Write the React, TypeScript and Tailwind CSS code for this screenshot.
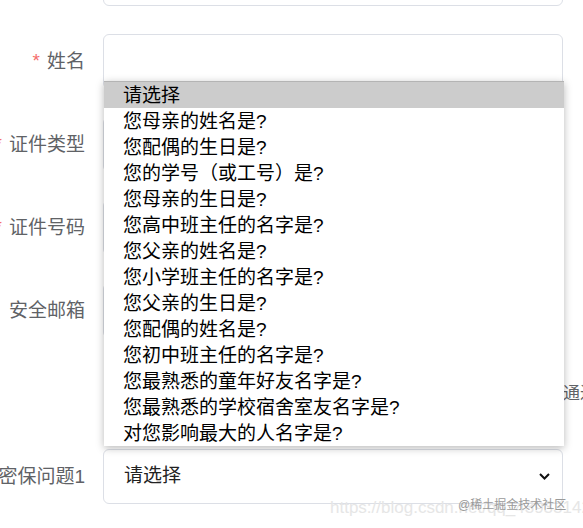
import type { ReactNode } from "react";

const questions = [
  "请选择",
  "您母亲的姓名是?",
  "您配偶的生日是?",
  "您的学号（或工号）是?",
  "您母亲的生日是?",
  "您高中班主任的名字是?",
  "您父亲的姓名是?",
  "您小学班主任的名字是?",
  "您父亲的生日是?",
  "您配偶的姓名是?",
  "您初中班主任的名字是?",
  "您最熟悉的童年好友名字是?",
  "您最熟悉的学校宿舍室友名字是?",
  "对您影响最大的人名字是?",
];

const font = { fontFamily: '"Liberation Sans", "Noto Sans CJK SC", sans-serif' };

const Field = ({
  label,
  required,
  children,
}: {
  label?: string;
  required?: boolean;
  children: ReactNode;
}) => (
  <div className="flex items-center h-[55px]">
    <label className="w-[85px] shrink-0 flex justify-end items-center whitespace-nowrap text-[19px] leading-none text-[#606266]">
      {required && <span className="text-[#f56c6c] mr-[7px] -mt-[2px]">*</span>}
      {label}
    </label>
    <div className="ml-[18px] w-[460px] h-[55px] shrink-0">{children}</div>
  </div>
);

const Input = () => (
  <div className="w-full h-full border border-[#dcdfe6] rounded-[6px] bg-white" />
);

const Chevron = () => (
  <svg width="11" height="7" viewBox="0 0 11 7" fill="none">
    <path d="M1 1l4.5 4.5L10 1" stroke="#111" strokeWidth="2" />
  </svg>
);

export default function App() {
  return (
    <div className="relative w-[583px] h-[528px] overflow-hidden bg-white" style={font}>
      <div className="-mt-[49px] flex flex-col gap-[28px]">
        <Field>
          <Input />
        </Field>
        <Field label="姓名" required>
          <Input />
        </Field>
        <Field label="证件类型" required>
          <Input />
        </Field>
        <Field label="证件号码" required>
          <Input />
        </Field>
        <Field label="安全邮箱">
          <Input />
        </Field>
        {/* hint line, mostly hidden under the open select list */}
        <div className="h-[55px] flex items-center pl-[104px] whitespace-nowrap text-[17px] leading-none text-[#606266]">
          为了您的账户安全，请设置密保问题，忘记密码时还可以直接通过密保问题找回密码
        </div>
        <Field label="密保问题1">
          <div className="w-full h-full border border-[#dcdfe6] rounded-[6px] bg-white flex items-center justify-between pl-[20px] pr-[12px] text-[19px] text-[#222]">
            <span>请选择</span>
            <Chevron />
          </div>
        </Field>
      </div>

      <ul className="absolute top-[81px] left-[104px] w-[460px] bg-white border-t border-[#b4b4b4] shadow-[0_2px_8px_rgba(0,0,0,0.28)]">
        {questions.map((q, i) => (
          <li
            key={q}
            className={`h-[26px] flex items-center pl-[19px] text-[19px] leading-none text-black ${
              i === 0 ? "bg-[#cccccc]" : ""
            }`}
          >
            {q}
          </li>
        ))}
      </ul>

      <div className="absolute left-[330px] top-[499px] text-[17px] leading-none text-[#e6e6e6] whitespace-nowrap">
        https://blog.csdn.net/qq_43933142
      </div>
      <div className="absolute left-[458px] top-[499px] text-[12px] leading-none text-[#9a9a9a] whitespace-nowrap">
        @稀土掘金技术社区
      </div>
    </div>
  );
}
